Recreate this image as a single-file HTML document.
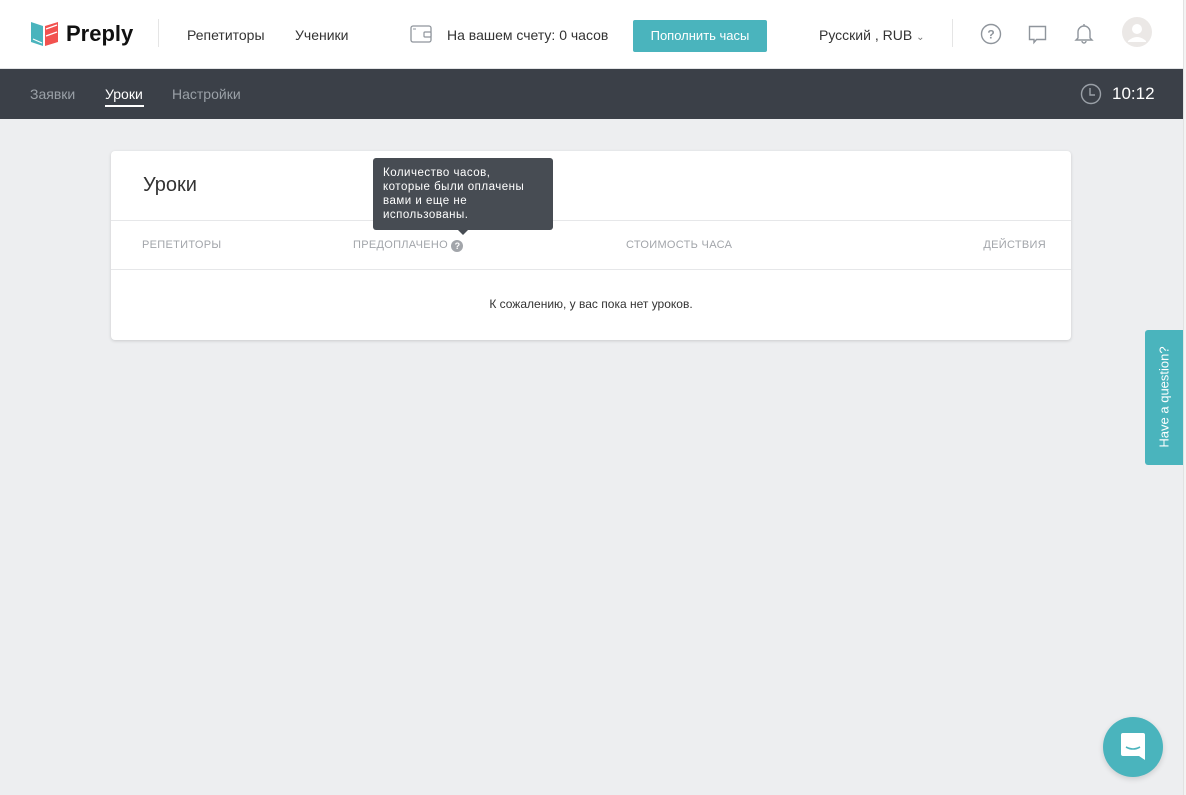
<!DOCTYPE html>
<html><head><meta charset="utf-8"><style>
*{box-sizing:border-box;margin:0;padding:0}
body{width:1186px;height:795px;overflow:hidden;background:#edeef0;font-family:"Liberation Sans",Arial,sans-serif;position:relative;color:#333}
.hdr{position:absolute;left:0;top:0;width:1183px;height:69px;background:#fff;border-bottom:1px solid #e3e4e6}
.t{position:absolute;white-space:nowrap}
.nav{position:absolute;left:0;top:69px;width:1183px;height:50px;background:#3b4048}
.card{position:absolute;left:111px;top:151px;width:960px;height:189px;background:#fff;border-radius:4px;box-shadow:0 1px 3px rgba(0,0,0,.15)}
.th{position:absolute;top:88px;font-size:11px;color:#a2a5aa;letter-spacing:.3px}
.sb{position:absolute;right:0;top:0;width:3px;height:795px;background:#f3f3f3;border-left:1px solid #e2e2e2}
</style></head><body>
<div class="hdr">
 <svg style="position:absolute;left:30px;top:20px" width="30" height="28" viewBox="0 0 30 28">
  <path d="M1 2 L13 6 L13 26 L1 22Z" fill="#4ab4bd"/><path d="M15 6 L28 2 L28 22 L15 26Z" fill="#f2524f"/>
  <path d="M16 9 L27 5 M16 16 L27 12 M3 19 L12 23" stroke="#fff" stroke-width="1.2"/>
 </svg>
 <div class="t" style="left:66px;top:21px;font-size:22px;font-weight:bold;color:#111">Preply</div>
 <div style="position:absolute;left:158px;top:19px;width:1px;height:28px;background:#e5e5e5"></div>
 <div class="t" style="left:187px;top:27px;font-size:14px;color:#333">Репетиторы</div>
 <div class="t" style="left:295px;top:27px;font-size:14px;color:#333">Ученики</div>
 <svg style="position:absolute;left:410px;top:25px" width="22" height="18" viewBox="0 0 22 18"><rect x="1" y="1" width="20" height="16" rx="2" fill="none" stroke="#8f959c" stroke-width="1.3"/><rect x="14" y="7" width="7" height="5" rx="1" fill="#fff" stroke="#8f959c" stroke-width="1.2"/><path d="M3 4h3" stroke="#8f959c"/></svg>
 <div class="t" style="left:447px;top:27px;font-size:14px;color:#333">На вашем счету: 0 часов</div>
 <div style="position:absolute;left:633px;top:20px;width:134px;height:32px;background:#4ab4bd;border-radius:2px;color:#fff;font-size:13px;text-align:center;line-height:32px">Пополнить часы</div>
 <div class="t" style="left:819px;top:27px;font-size:14px;color:#333">Русский , RUB <span style="font-size:10px;color:#777">&#8964;</span></div>
 <div style="position:absolute;left:952px;top:19px;width:1px;height:28px;background:#e5e5e5"></div>
 <svg style="position:absolute;left:980px;top:23px" width="22" height="22"><circle cx="11" cy="11" r="9.5" fill="none" stroke="#8f959c" stroke-width="1.4"/><text x="11" y="15.5" font-size="12" font-weight="bold" text-anchor="middle" fill="#8f959c" font-family="Liberation Sans">?</text></svg>
 <svg style="position:absolute;left:1028px;top:25px" width="20" height="20"><path d="M1.5 1.5h16v13h-9l-2.5 3v-3h-4.5z" fill="none" stroke="#8f959c" stroke-width="1.4"/></svg>
 <svg style="position:absolute;left:1074px;top:23px" width="20" height="22"><path d="M4 15V9a6 6 0 0 1 12 0v6l2 2H2z M8 18a2 2 0 0 0 4 0 M10 1v2" fill="none" stroke="#8f959c" stroke-width="1.4"/></svg>
 <svg style="position:absolute;left:1122px;top:17px" width="30" height="30"><circle cx="15" cy="15" r="15" fill="#ebe8e6"/><circle cx="15" cy="12" r="5" fill="#fff"/><path d="M6 24q9-8 18 0v1H6z" fill="#fff"/></svg>
</div>
<div class="nav">
 <div class="t" style="left:30px;top:17px;font-size:14px;color:#9aa0a7">Заявки</div>
 <div class="t" style="left:105px;top:17px;font-size:14px;color:#fff">Уроки</div>
 <div style="position:absolute;left:105px;top:36px;width:39px;height:2px;background:#fff"></div>
 <div class="t" style="left:172px;top:17px;font-size:14px;color:#9aa0a7">Настройки</div>
 <svg style="position:absolute;left:1080px;top:14px" width="22" height="22"><circle cx="11" cy="11" r="9.5" fill="none" stroke="#9aa0a7" stroke-width="1.4"/><path d="M10 5v7h5" fill="none" stroke="#9aa0a7" stroke-width="1.4"/></svg>
 <div class="t" style="left:1112px;top:15px;font-size:17px;color:#fff">10:12</div>
</div>
<div class="card">
 <div class="t" style="left:32px;top:23px;font-size:20px;color:#333">Уроки</div>
 <div style="position:absolute;left:0;top:69px;width:960px;height:1px;background:#e6e7e9"></div>
 <div class="th" style="left:31px">РЕПЕТИТОРЫ</div>
 <div class="th" style="left:242px">ПРЕДОПЛАЧЕНО <span style="display:inline-block;width:12px;height:12px;border-radius:6px;background:#a2a5aa;color:#fff;font-size:9px;text-align:center;line-height:12px;font-weight:bold;letter-spacing:0;vertical-align:-1px">?</span></div>
 <div class="th" style="left:515px">СТОИМОСТЬ ЧАСА</div>
 <div class="th" style="right:25px">ДЕЙСТВИЯ</div>
 <div style="position:absolute;left:0;top:118px;width:960px;height:1px;background:#e6e7e9"></div>
 <div class="t" style="left:0;width:960px;text-align:center;top:146px;font-size:12px;color:#333">К сожалению, у вас пока нет уроков.</div>
</div>
<div style="position:absolute;left:373px;top:158px;width:180px;height:72px;background:#474c53;border-radius:3px;color:#fff;font-size:11.5px;line-height:14px;padding:8px 26px 8px 10px;letter-spacing:.5px">Количество часов, которые были оплачены вами и еще не использованы.</div>
<div style="position:absolute;left:458px;top:230px;width:0;height:0;border-left:5px solid transparent;border-right:5px solid transparent;border-top:5px solid #474c53"></div>
<div style="position:absolute;left:1145px;top:330px;width:38px;height:135px;background:#4ab4bd;border-radius:3px 0 0 3px"><div class="t" style="left:19px;top:67px;transform:translate(-50%,-50%) rotate(-90deg);color:#fff;font-size:13px">Have a question?</div></div>
<div style="position:absolute;left:1103px;top:717px;width:60px;height:60px;border-radius:30px;background:#4ab4bd;box-shadow:0 2px 6px rgba(0,0,0,.15)">
 <svg style="position:absolute;left:16px;top:16px" width="28" height="28"><path d="M2 2Q2 0 4 0h20q2 0 2 2v25l-6-4H4q-2 0-2-2z" fill="#fff"/><path d="M7 14q7 4 14 0" fill="none" stroke="#4ab4bd" stroke-width="1.6"/></svg>
</div>
<div class="sb"></div>
</body></html>
